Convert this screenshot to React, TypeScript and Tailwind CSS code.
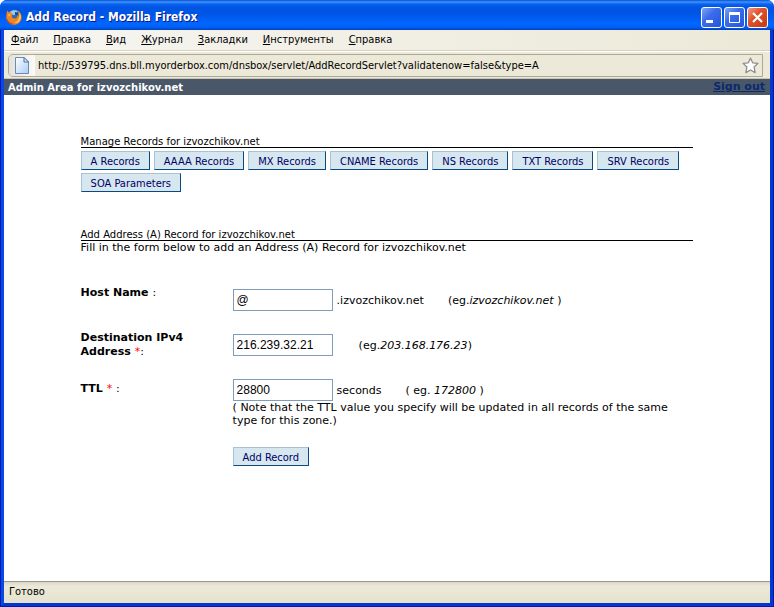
import type { ReactNode } from 'react';

const MENU = ['Файл', 'Правка', 'Вид', 'Журнал', 'Закладки', 'Инструменты', 'Справка'];

const RECORD_TYPES = [
  'A Records',
  'AAAA Records',
  'MX Records',
  'CNAME Records',
  'NS Records',
  'TXT Records',
  'SRV Records',
  'SOA Parameters',
];

function FirefoxIcon() {
  return (
    <svg width="16" height="16" viewBox="0 0 16 16">
      <circle cx="8.4" cy="7" r="6.4" fill="#2b6cb8" />
      <path d="M4 3C6 .9 10 .6 12 2.600C10 3 11 5 9 5.500C8 7 6 5 5 6Z" fill="#8fd0ee" />
      <path d="M9 3l3 1-1 2-2-.5z" fill="#173f86" />
      <path
        d="M1.300 1.400L2.600 3.400C3.200 2.800 4.200 2.400 5 2.200C4.600 3.200 5 4 5.600 4.500L7.300 5L6 6.300C5.600 8.500 7 9.800 9 9.600C11 9.300 11.500 8 11.200 6.500L12.500 7.500C13 5.500 12.500 3.500 11.300 1.500C14.200 2.800 15.900 6 15.600 9C15 13 11.800 15.800 8 15.800C3.800 15.800.4 12.500.3 8.500C.2 6 .7 3.200 1.300 1.400Z"
        fill="#ee8427"
      />
      <path d="M13.200 3.600C15 6 15.200 8.500 14.200 10.500C12.800 13.400 10.500 14.400 8.300 14C11 13 12.700 11 13 8.500C13.300 7 13.500 5.500 13.200 3.600Z" fill="#fbd348" />
      <path d="M.8 9C1.800 12.500 4.800 14.900 8.500 14.900C4.500 16.600.4 13 .8 9Z" fill="#b5420f" />
      <path d="M1.800 5.500L4 4.800L4.500 6.500L2.800 7.800Z" fill="#f9b04a" />
    </svg>
  );
}

function PageIcon() {
  return (
    <svg width="14" height="17" viewBox="0 0 14 17">
      <defs>
        <linearGradient id="page" x1="0" y1="0" x2="1" y2="1">
          <stop offset="0" stopColor="#ffffff" />
          <stop offset="1" stopColor="#a9cdf7" />
        </linearGradient>
      </defs>
      <path d="M.5.5H9L13.500 5V16.500H.5Z" fill="url(#page)" stroke="#6b89bd" />
      <path d="M9 .5V5H13.500Z" fill="#dcebfd" stroke="#4c6ea9" />
    </svg>
  );
}

function StarIcon() {
  return (
    <svg width="17" height="17" viewBox="0 0 17 17">
      <path
        d="M8.500 1.200L10.700 5.800L15.900 6.400L12.100 10L13.100 15.600L8.500 13L3.900 15.600L4.900 10L1.100 6.400L6.300 5.800Z"
        fill="#fff"
        stroke="#8d8d8d"
        strokeWidth="1.300"
        strokeLinejoin="round"
      />
    </svg>
  );
}

function WindowButton({ label, red, children }: { label: string; red?: boolean; children: ReactNode }) {
  return (
    <button
      type="button"
      aria-label={label}
      className={`h-[21px] w-[21px] rounded-[3px] border border-white bg-linear-to-br ${
        red ? 'from-[#ee9a80] via-[#e0512b] via-40% to-[#c23a12]' : 'from-[#7fa5f5] via-[#3c6cea] via-40% to-[#2356dc]'
      }`}
    >
      <svg width="19" height="19" viewBox="0 0 19 19" fill="none" stroke="#fff">
        {children}
      </svg>
    </button>
  );
}

function TitleBar() {
  return (
    <header className="flex h-[30px] shrink-0 items-center justify-between rounded-t-[7px] bg-[linear-gradient(180deg,#0a4fd0_0,#3d95ff_2px,#0a63ee_4px,#0055e5_7px,#0055e5_14px,#0066ff_23px,#0062f8_27px,#0040c0_30px)] pt-1 pr-[6px] pl-[6px]">
      <div className="flex items-center gap-1">
        <FirefoxIcon />
        <h1 className="font-['DejaVu_Sans_Condensed','DejaVu_Sans',sans-serif] text-[12px] font-bold text-white [text-shadow:1px_1px_#0a1883]">
          Add Record - Mozilla Firefox
        </h1>
      </div>
      <div className="flex gap-[2px]">
        <WindowButton label="Свернуть">
          <path d="M4 13.500H11" strokeWidth="3" />
        </WindowButton>
        <WindowButton label="Развернуть">
          <path d="M4.500 5V14.500H14.500V5" />
          <path d="M4 5.500H15" strokeWidth="3" />
        </WindowButton>
        <WindowButton label="Закрыть" red>
          <path d="M5 5L14 14M14 5L5 14" strokeWidth="2.200" />
        </WindowButton>
      </div>
    </header>
  );
}

function SectionTitle({ children }: { children: ReactNode }) {
  return <h2 className="border-b border-black text-[10px] leading-[11px]">{children}</h2>;
}

function PushButton({ type = 'button', children }: { type?: 'button' | 'submit'; children: ReactNode }) {
  return (
    <button
      type={type}
      className="h-[19px] border border-t-[#a9c1d4] border-r-[#0b4a80] border-b-[#0b4a80] border-l-[#a9c1d4] bg-[#d6e7ef] px-[9px] pt-[2px] font-['DejaVu_Sans_Condensed','DejaVu_Sans',sans-serif] text-[11px] leading-[15px] text-[#000066]"
    >
      {children}
    </button>
  );
}

function TextBox({ id, value }: { id: string; value: string }) {
  return (
    <input
      id={id}
      type="text"
      defaultValue={value}
      className="h-[22px] w-[100px] border border-[#7f9db9] bg-white px-[3px] font-['Liberation_Sans',sans-serif] text-[12px] leading-[20px] outline-none"
    />
  );
}

const Required = () => <span className="font-normal text-[#ff0000]">*</span>;

export default function App() {
  return (
    <div className="flex min-h-screen flex-col bg-white font-['DejaVu_Sans',sans-serif] text-[11px] text-black">
      <div className="flex grow flex-col rounded-t-[7px] bg-[#0040dd]">
        <TitleBar />
        <div className="flex grow flex-col border-x border-b border-[#0019b0]">
          <div className="flex grow flex-col border-x-3 border-b-3 border-[#0a48e6] border-r-[#0238d0] border-b-[#0238d0] bg-white">
            <nav className="flex h-[21px] shrink-0 items-center gap-[15px] border-b border-[#d8d2bd] bg-linear-to-r from-[#f6f5f1] to-[#ece9d8] px-[7px] font-['DejaVu_Sans_Condensed','DejaVu_Sans',sans-serif]">
              {MENU.map((item) => (
                <button key={item} type="button" className="first-letter:underline">
                  {item}
                </button>
              ))}
            </nav>

            <div className="h-7 shrink-0 border-t border-b border-t-white border-b-[#c9c5b2] bg-[#ece9d8] py-[2px] pr-[7px] pl-1">
              <div className="flex h-[23px] items-center rounded-l-[5px] border border-[#aca899] pr-[3px]">
                <div className="flex h-full w-[26px] items-center justify-center rounded-l-[4px] bg-linear-to-r from-[#e4e2d8] to-[#fbfaf6]">
                  <PageIcon />
                </div>
                <input
                  type="text"
                  aria-label="Адрес"
                  defaultValue="http://539795.dns.bll.myorderbox.com/dnsbox/servlet/AddRecordServlet?validatenow=false&type=A"
                  className="h-full grow bg-transparent pl-[3px] font-['DejaVu_Sans_Condensed','DejaVu_Sans',sans-serif] outline-none"
                />
                <button type="button" aria-label="Добавить в закладки">
                  <StarIcon />
                </button>
              </div>
            </div>

            <div className="flex h-4 shrink-0 items-center justify-between bg-[#4a5768] pr-[5px] pl-1 font-bold">
              <span className="text-[10px] text-white">Admin Area for izvozchikov.net</span>
              <a href="#signout" className="text-[#0b2a6b] underline">
                Sign out
              </a>
            </div>

            <main className="mx-auto w-4/5 grow pt-[41px]">
              <SectionTitle>Manage Records for izvozchikov.net</SectionTitle>
              <div className="mt-[3px] flex flex-wrap gap-x-1 gap-y-[3px]">
                {RECORD_TYPES.map((name) => (
                  <PushButton key={name}>{name}</PushButton>
                ))}
              </div>

              <div className="mt-[37px]">
                <SectionTitle>Add Address (A) Record for izvozchikov.net</SectionTitle>
                <p className="leading-[14px]">Fill in the form below to add an Address (A) Record for izvozchikov.net</p>
              </div>

              <form className="mt-[31px] grid grid-cols-[152px_1fr] gap-y-5 leading-[13px]">
                <label htmlFor="host" className="leading-[14px] font-bold">
                  Host Name <span className="font-normal">:</span>
                </label>
                <div className="flex items-center pt-[3px]">
                  <TextBox id="host" value="@" />
                  <span className="ml-1">.izvozchikov.net</span>
                  <span className="ml-6">
                    (eg.<i>izvozchikov.net</i> )
                  </span>
                </div>

                <label htmlFor="ip" className="leading-[14px] font-bold">
                  Destination IPv4
                  <br />
                  Address <Required />
                  <span className="font-normal">:</span>
                </label>
                <div className="flex h-[25px] items-center pt-[3px]">
                  <TextBox id="ip" value="216.239.32.21" />
                  <span className="ml-[26px]">
                    (eg.<i>203.168.176.23</i>)
                  </span>
                </div>

                <label htmlFor="ttl" className="pt-[3px] leading-[14px] font-bold">
                  TTL <Required /> <span className="font-normal">:</span>
                </label>
                <div>
                  <div className="flex items-center">
                    <TextBox id="ttl" value="28800" />
                    <span className="ml-1">seconds</span>
                    <span className="ml-6">
                      ( eg. <i>172800</i> )
                    </span>
                  </div>
                  <p>( Note that the TTL value you specify will be updated in all records of the same type for this zone.)</p>
                </div>

                <div className="col-start-2">
                  <PushButton type="submit">Add Record</PushButton>
                </div>
              </form>
            </main>

            <footer className="flex h-[22px] shrink-0 items-center border-t border-[#9a988c] bg-linear-to-b from-[#d9d6c6] via-[#ece9d8] via-20% to-[#e6e2cf] px-[5px] font-['DejaVu_Sans_Condensed','DejaVu_Sans',sans-serif]">
              Готово
            </footer>
          </div>
        </div>
      </div>
    </div>
  );
}
